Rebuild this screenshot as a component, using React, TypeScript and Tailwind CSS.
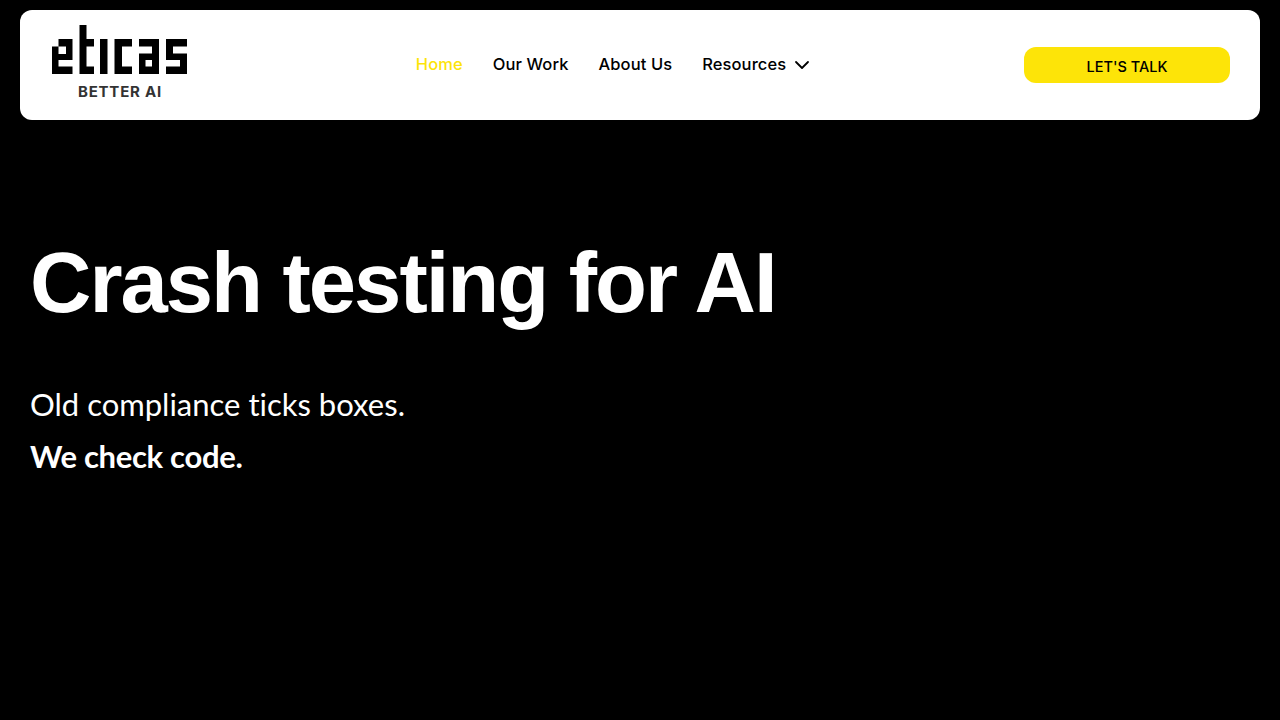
import React from "react";
import { ChevronDown } from "lucide-react";

// logo letters sit on a blocky grid, coordinates read off the reference
const Logo = () => (
    <svg width="136" height="49" viewBox="0 0 136 49" fill="#000" aria-label="eticas">
        <path d="M0 21.5h6.5V14h14v21H6.5v6.5h14V49H0V21.5zm6.5 0V29H14v-7.5H6.5z" fillRule="evenodd" />
        <path d="M27.5 0h7v14H42v7.5h-7.5v20H42V49H27.5V0z" />
        <path d="M48 14h7.5v35H48z" />
        <path d="M62.5 14H80v7.5H70v20h10V49H62.5V14z" />
        <path d="M87 14h20v35H87V28.5h13v-7H87V14zm6.5 21v6.5h6.5V35h-6.5z" fillRule="evenodd" />
        <path d="M114 14h21v7.5h-14v7h14V49h-21v-7.5h14V35h-14V14z" />
    </svg>
);

const navLinks = ["Home", "Our Work", "About Us"];

const App = () => {
    return (
        <div className="min-h-screen h-[720px] bg-black px-5 pt-2.5 overflow-hidden">
            <header className="h-[110px] bg-white rounded-xl flex items-center justify-between pl-8 pr-[30px] font-['Inter',sans-serif]">
                <div className="w-[136px] flex flex-col items-center -mt-[4px]">
                    <Logo />
                    <span className="text-[15px] leading-5 font-bold text-[#333] tracking-[0.8px] mt-[8px]">BETTER AI</span>
                </div>
                <nav className="flex items-center gap-[30px] text-[16.5px] tracking-[0.1px] font-medium text-black ml-[13px] -mt-px">
                    {navLinks.map((link, i) => (
                        <a key={link} href="#" className={i === 0 ? "text-[#fde408]" : ""}>{link}</a>
                    ))}
                    <a href="#" className="flex items-center gap-1 -mr-[5px]">
                        Resources <ChevronDown size={24} strokeWidth={1.8} />
                    </a>
                </nav>
                <button className="w-[206px] h-9 bg-[#fde408] rounded-xl text-[14.5px] font-medium text-black pt-1">LET'S TALK</button>
            </header>
            <main className="px-2.5 pt-[110px] text-white">
                <h1 className="font-['Liberation_Sans',sans-serif] font-bold text-[85px] leading-[106px] tracking-[-2px]">Crash testing for AI</h1>
                <p className="font-['Lato',sans-serif] text-[31px] leading-[52px] mt-[42px] [font-variant-ligatures:none]">Old compliance ticks boxes.</p>
                <p className="font-['Lato',sans-serif] text-[31px] leading-[52px] font-bold tracking-[-0.3px] [font-variant-ligatures:none]">We check code.</p>
            </main>
        </div>
    );
};

export default App;
